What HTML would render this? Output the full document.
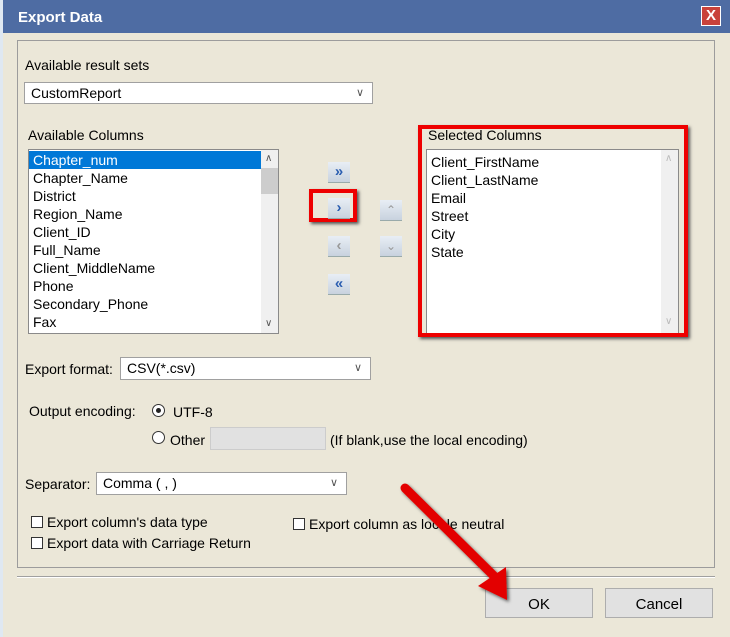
<!DOCTYPE html>
<html><head><style>
*{box-sizing:border-box;margin:0;padding:0}
body{width:730px;height:637px;overflow:hidden;background:#ebe7d8;font-family:"Liberation Sans",sans-serif;font-size:14px;color:#000;position:relative}
.a{position:absolute}
.title{left:3px;top:0;width:727px;height:33px;background:#4e6ca3;color:#fff;font-weight:bold;font-size:15px;padding:9px 0 0 15px}
.sel{background:#fff;border:1px solid #a0a0a0}
.sel span{position:absolute;left:6px;top:2px}
.sel i{position:absolute;right:8px;top:3px;font-style:normal;font-size:11px;color:#555}
.list{background:#fff;border:1px solid #8a8a8a;overflow:hidden}
.list p{height:18px;line-height:18px;padding-left:4px}
.sb{position:absolute;right:0;top:0;bottom:0;width:17px;background:#f0f0f0}
.sb b{position:absolute;left:4px;font-size:10px;font-weight:normal;color:#555;line-height:12px}
.btn{position:absolute;width:22px;height:21px;background:linear-gradient(#e8eef5,#c8d2de);border-bottom:1px solid #9aa;}
.cb{display:inline-block;width:12px;height:12px;border:1px solid #333;background:#fff;vertical-align:-1px;margin-right:4px}
.pb{position:absolute;background:#e1e1e1;border:1px solid #adadad;text-align:center;line-height:32px;font-size:15px}
</style></head><body>
<div class="a" style="left:0;top:0;width:3px;height:637px;background:#dfe8f2"></div>
<div class="a title">Export Data</div>
<div class="a" style="left:701px;top:6px;width:20px;height:20px;background:#c9423b;border:1px solid #fff;color:#fff;font-weight:bold;text-align:center;line-height:18px;font-size:15px">X</div>
<div class="a" style="left:17px;top:40px;width:698px;height:528px;border:1px solid #9c9c9c"></div>
<div class="a" style="left:17px;top:576px;width:698px;height:2px;border-top:1px solid #a0a0a0;border-bottom:1px solid #fff"></div>

<div class="a" style="left:25px;top:57px">Available result sets</div>
<div class="a sel" style="left:24px;top:82px;width:349px;height:22px"><span>CustomReport</span><i>&#8744;</i></div>

<div class="a" style="left:28px;top:127px">Available Columns</div>
<div class="a list" style="left:28px;top:149px;width:251px;height:185px">
<p style="background:#0078d7;color:#fff;margin-right:17px;margin-top:1px">Chapter_num</p><p>Chapter_Name</p><p>District</p><p>Region_Name</p><p>Client_ID</p><p>Full_Name</p><p>Client_MiddleName</p><p>Phone</p><p>Secondary_Phone</p><p>Fax</p>
<div class="sb"><span style="position:absolute;top:18px;left:0;width:17px;height:26px;background:#cdcdcd"></span><b style="top:3px">&#8743;</b><b style="bottom:3px">&#8744;</b></div>
</div>

<div class="btn" style="left:328px;top:162px;color:#2a5db0;font-weight:bold;font-size:15px;line-height:20px;text-align:center">&#187;</div>
<div class="a" style="left:309px;top:189px;width:48px;height:33px;border:4px solid #e00;box-shadow:2px 2px 3px #555"></div>
<div class="btn" style="left:328px;top:198px;color:#2a5db0;font-weight:bold;font-size:15px;line-height:20px;text-align:center">&#8250;</div>
<div class="btn" style="left:328px;top:236px;color:#999;font-weight:bold;font-size:15px;line-height:20px;text-align:center">&#8249;</div>
<div class="btn" style="left:328px;top:274px;color:#2a5db0;font-weight:bold;font-size:15px;line-height:20px;text-align:center">&#171;</div>
<div class="btn" style="left:380px;top:200px;color:#999;font-size:12px;line-height:20px;text-align:center">&#8963;</div>
<div class="btn" style="left:380px;top:236px;color:#999;font-size:12px;line-height:20px;text-align:center">&#8964;</div>

<div class="a list" style="left:426px;top:149px;width:253px;height:186px;padding-top:3px">
<p>Client_FirstName</p><p>Client_LastName</p><p>Email</p><p>Street</p><p>City</p><p>State</p>
<div class="sb"><b style="top:3px;color:#bbb">&#8743;</b><b style="bottom:6px;color:#bbb">&#8744;</b></div>
</div>
<div class="a" style="left:428px;top:127px">Selected Columns</div>
<div class="a" style="left:418px;top:125px;width:270px;height:212px;border:4px solid #e00;box-shadow:2px 2px 3px #555"></div>

<div class="a" style="left:25px;top:361px">Export format:</div>
<div class="a sel" style="left:120px;top:357px;width:251px;height:23px"><span>CSV(*.csv)</span><i>&#8744;</i></div>

<div class="a" style="left:29px;top:403px">Output encoding:</div>
<div class="a" style="left:152px;top:404px;width:13px;height:13px;border:1px solid #333;border-radius:50%;background:#fff"><div style="position:absolute;left:3px;top:3px;width:5px;height:5px;border-radius:50%;background:#222"></div></div>
<div class="a" style="left:173px;top:404px">UTF-8</div>
<div class="a" style="left:152px;top:431px;width:13px;height:13px;border:1px solid #333;border-radius:50%;background:#fff"></div>
<div class="a" style="left:170px;top:432px">Other</div>
<div class="a" style="left:210px;top:427px;width:116px;height:23px;background:#e1e1e1;border:1px solid #ccc"></div>
<div class="a" style="left:330px;top:432px">(If blank,use the local encoding)</div>

<div class="a" style="left:25px;top:476px">Separator:</div>
<div class="a sel" style="left:96px;top:472px;width:251px;height:23px"><span>Comma ( , )</span><i>&#8744;</i></div>

<div class="a" style="left:31px;top:514px"><span class="cb"></span>Export column's data type</div>
<div class="a" style="left:31px;top:535px"><span class="cb"></span>Export data with Carriage Return</div>
<div class="a" style="left:293px;top:516px"><span class="cb"></span>Export column as locale neutral</div>

<div class="pb" style="left:485px;top:588px;width:108px;height:30px">OK</div>
<div class="pb" style="left:605px;top:588px;width:108px;height:30px">Cancel</div>

<svg class="a" style="left:0;top:0" width="730" height="637">
<defs><filter id="s"><feDropShadow dx="2" dy="2" stdDeviation="1.5" flood-color="#000" flood-opacity=".6"/></filter></defs>
<g filter="url(#s)">
<line x1="405" y1="488" x2="495" y2="577" stroke="#e30000" stroke-width="9" stroke-linecap="round"/>
<polygon points="478,586 506,567 507,600" fill="#e30000"/>
</g>
</svg>
</body></html>
